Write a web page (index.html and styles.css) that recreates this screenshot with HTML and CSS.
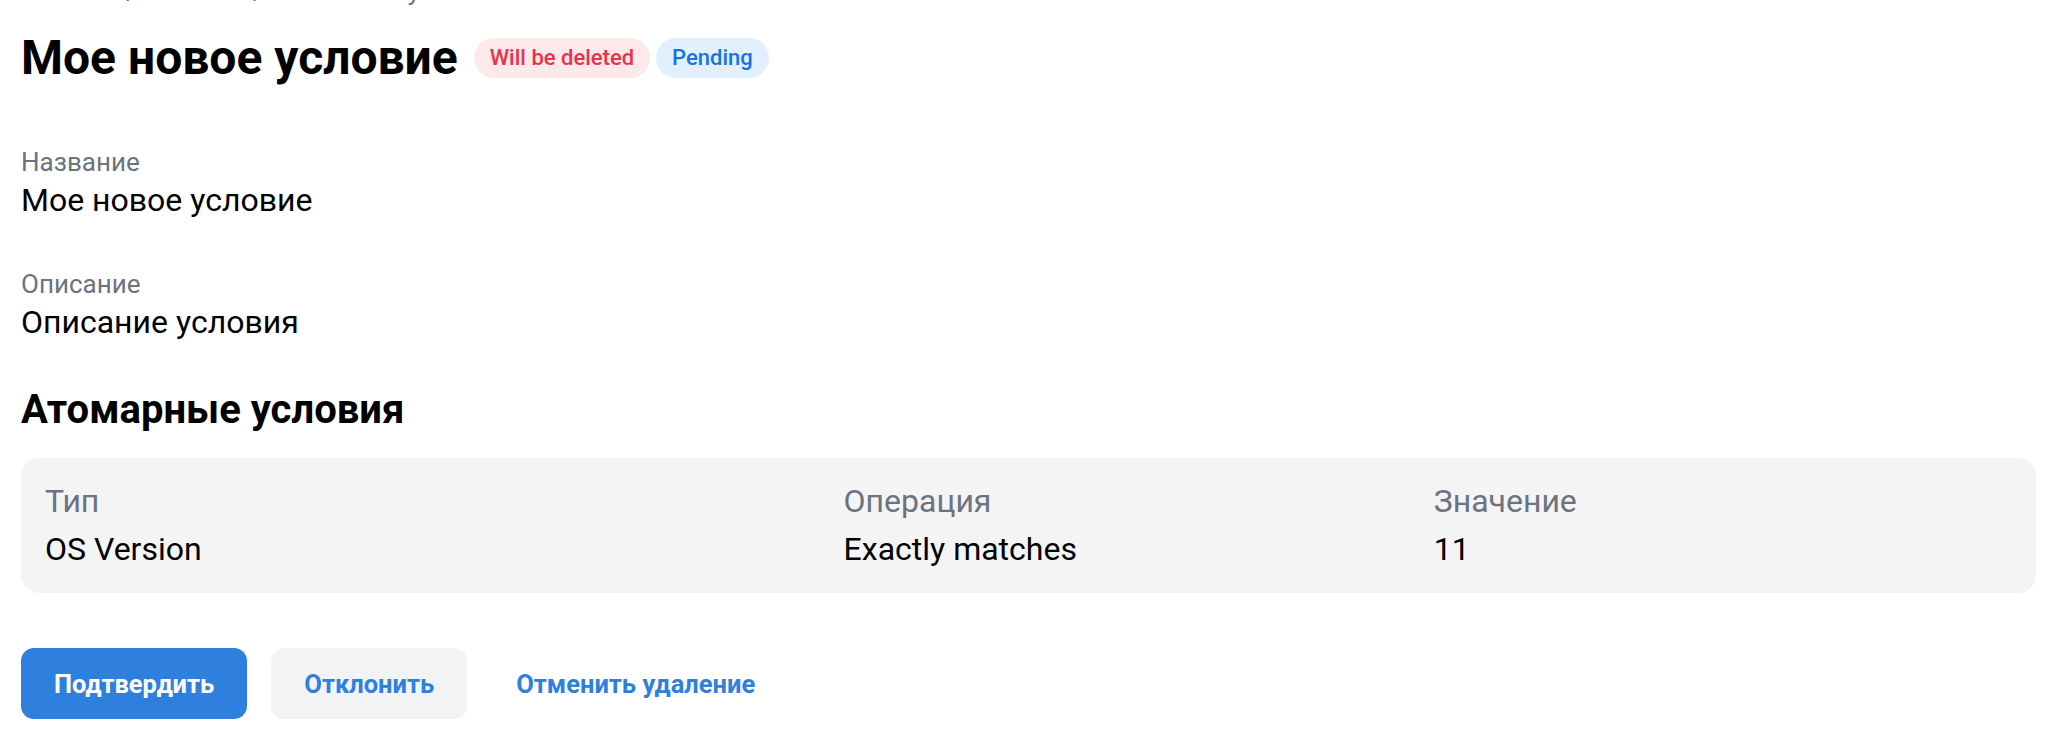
FILE: index.html
```html
<!DOCTYPE html>
<html lang="ru">
<head>
<meta charset="utf-8">
<title>Мое новое условие</title>
<link rel="stylesheet" href="styles.css">
</head>
<body>
<main class="page">
  <div class="breadcrumb">Главная / Условия / Мое новое условие</div>
  <div class="title-row">
    <h1 class="title">Мое новое условие</h1>
    <span class="badge badge-red">Will be deleted</span>
    <span class="badge badge-blue">Pending</span>
  </div>

  <div class="field field-first">
    <div class="field-label">Название</div>
    <div class="field-value">Мое новое условие</div>
  </div>
  <div class="field">
    <div class="field-label">Описание</div>
    <div class="field-value">Описание условия</div>
  </div>

  <h2 class="section-title">Атомарные условия</h2>
  <div class="atoms">
    <div class="atom-col">
      <div class="atom-label">Тип</div>
      <div class="atom-value">OS Version</div>
    </div>
    <div class="atom-col">
      <div class="atom-label">Операция</div>
      <div class="atom-value">Exactly matches</div>
    </div>
    <div class="atom-col">
      <div class="atom-label">Значение</div>
      <div class="atom-value">11</div>
    </div>
  </div>

  <div class="actions">
    <button class="btn btn-primary">Подтвердить</button>
    <button class="btn btn-secondary">Отклонить</button>
    <button class="btn btn-link">Отменить удаление</button>
  </div>
</main>
</body>
</html>
```

FILE: styles.css
```css
* { box-sizing: border-box; }
html, body { margin: 0; padding: 0; background: #ffffff; }
body {
  font-family: Roboto, "Noto Sans", "Liberation Sans", sans-serif;
  color: #000000;
  overflow: hidden;
}
.page {
  padding: 0 22px 0 21px;
}
.breadcrumb {
  margin-top: -25px;
  font-size: 26px;
  line-height: 32px;
  color: #6b7280;
}
.title-row {
  margin-top: 21px;
  display: flex;
  align-items: center;
}
.title {
  margin: 0 16px 0 0;
  font-size: 48px;
  line-height: 59px;
  font-weight: 700;
}
.badge {
  display: inline-flex;
  align-items: center;
  height: 40px;
  padding: 0 16px;
  border-radius: 20px;
  font-size: 22px;
  font-weight: 500;
  margin-right: 6px;
}
.badge-red { background: #fde8ea; color: #e8334a; }
.badge-blue { background: #e2effd; color: #1473e6; }

.field { margin-top: 46px; }
.field-first { margin-top: 57px; }
.field-label {
  font-size: 26px;
  line-height: 36px;
  color: #6b7280;
}
.field-value {
  font-size: 32px;
  line-height: 40px;
}
.section-title {
  margin: 45px 0 0 0;
  font-size: 40px;
  line-height: 46px;
  font-weight: 700;
}
.atoms {
  margin-top: 25px;
  background: #f4f4f5;
  border-radius: 18px;
  padding: 23px 24px 24px 24px;
  display: grid;
  grid-template-columns: 406fr 300fr 294fr;
}
.atom-label {
  font-size: 32px;
  line-height: 40px;
  color: #6b7280;
}
.atom-value {
  margin-top: 8px;
  font-size: 32px;
  line-height: 40px;
}
.actions {
  margin-top: 55px;
  display: flex;
  gap: 24px;
}
.btn {
  height: 71px;
  border: none;
  border-radius: 13px;
  font-family: inherit;
  font-size: 25.5px;
  font-weight: 700;
  padding: 0 33px;
  cursor: pointer;
}
.btn-primary { background: #2f80de; color: #ffffff; }
.btn-secondary { background: #f1f3f5; color: #2f80de; }
.btn-link { background: transparent; color: #2f80de; padding: 0 25px; }
```
